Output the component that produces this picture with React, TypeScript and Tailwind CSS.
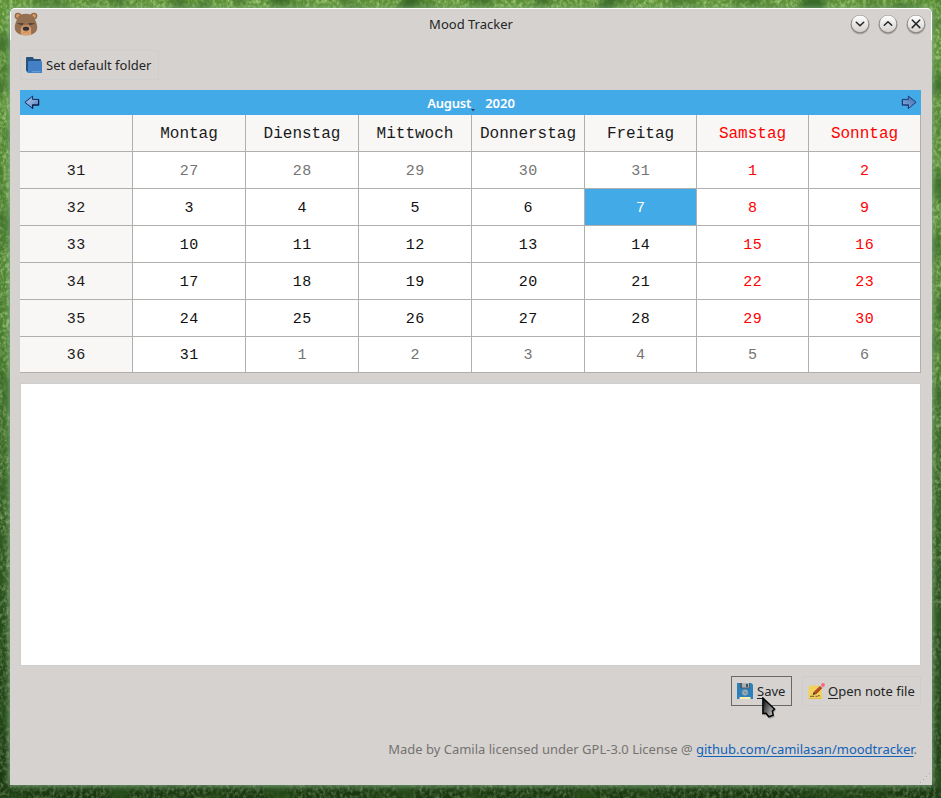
import React from "react";

const days = ["", "Montag", "Dienstag", "Mittwoch", "Donnerstag", "Freitag", "Samstag", "Sonntag"];

const weeks = [
  [31, 27, 28, 29, 30, 31, 1, 2],
  [32, 3, 4, 5, 6, 7, 8, 9],
  [33, 10, 11, 12, 13, 14, 15, 16],
  [34, 17, 18, 19, 20, 21, 22, 23],
  [35, 24, 25, 26, 27, 28, 29, 30],
  [36, 31, 1, 2, 3, 4, 5, 6],
];

function cellTone(row: number, col: number): string {
  if (col === 0) return "bg-[#f8f7f6] text-[#1a1a1a]";
  if (row === 1 && col === 5) return "bg-[#43aae8] text-white";
  const outside = (row === 0 && col < 6) || (row === 5 && col > 1);
  if (outside) return "bg-white text-[#747474]";
  if (col > 5) return "bg-white text-[#ff0000]";
  return "bg-white text-[#111111]";
}

function Grass() {
  return (
    <svg className="absolute inset-0" width="941" height="798" aria-hidden="true">
      <defs>
        <linearGradient id="grassBase" x1="0" y1="0" x2="0" y2="1">
          <stop offset="0" stopColor="#5c9136" />
          <stop offset="0.45" stopColor="#4b7f30" />
          <stop offset="0.75" stopColor="#345f24" />
          <stop offset="1" stopColor="#234717" />
        </linearGradient>
        <linearGradient id="shade" x1="0" y1="0" x2="0" y2="1">
          <stop offset="0.4" stopColor="#0a1f06" stopOpacity="0" />
          <stop offset="0.95" stopColor="#0a1f06" stopOpacity="0.38" />
        </linearGradient>
        <filter id="blades" x="0" y="0" width="100%" height="100%">
          <feTurbulence type="fractalNoise" baseFrequency="0.3 0.25" numOctaves="3" seed="4" />
          <feColorMatrix values="0 0 0 0 0.68  0 0 0 0 0.88  0 0 0 0 0.42  1.3 0 0 0 -0.52" />
        </filter>
        <filter id="clumps" x="0" y="0" width="100%" height="100%">
          <feTurbulence type="fractalNoise" baseFrequency="0.03 0.03" numOctaves="2" seed="9" />
          <feColorMatrix values="0 0 0 0 0.04  0 0 0 0 0.14  0 0 0 0 0.02  3.2 0 0 0 -1.45" />
        </filter>
        <filter id="halo" x="-5%" y="-5%" width="110%" height="110%">
          <feGaussianBlur stdDeviation="2.6" />
        </filter>
      </defs>
      <rect width="941" height="798" fill="url(#grassBase)" />
      <rect width="941" height="798" filter="url(#blades)" />
      <rect width="941" height="798" filter="url(#clumps)" />
      <rect width="941" height="798" fill="url(#shade)" />
      <rect x="8" y="7" width="926" height="780" rx="5" fill="#86b088" opacity="0.7" filter="url(#halo)" />
    </svg>
  );
}

function Bear() {
  return (
    <svg width="24" height="24" viewBox="0 0 24 24" aria-hidden="true">
      <circle cx="4" cy="4" r="3.3" fill="#8d6748" />
      <circle cx="20" cy="4" r="3.3" fill="#8d6748" />
      <circle cx="4" cy="4" r="2" fill="#d99b69" />
      <circle cx="20" cy="4" r="2" fill="#d99b69" />
      <path d="M12 1.8C6 1.8 3 5 2.4 9C1.5 11 .8 13 .8 15.4C.8 20.6 5.5 23.2 12 23.2S23.2 20.6 23.2 15.4C23.2 13 22.5 11 21.6 9C21 5 18 1.8 12 1.8Z" fill="#957050" />
      <path d="M12 13.2c-3.4 0-5.1 1.7-5.1 4.4v4.8c3 1.1 7.2 1.1 10.2 0v-4.8c0-2.7-1.7-4.4-5.1-4.4Z" fill="#e0a06c" />
      <path d="M3.4 11.6h6.2M14.4 11.6h6.2" stroke="#5a4638" strokeWidth="1" />
      <path d="M5.5 12.2h3.3M15.2 12.2h3.3" stroke="#4a3c34" strokeWidth="1.1" />
      <ellipse cx="12" cy="16.7" rx="3.2" ry="2.1" fill="#303239" />
      <path d="M12 18.5v1.2M9.2 20.8c1.3-1.3 4.3-1.3 5.6 0" fill="none" stroke="#b37f55" strokeWidth=".7" />
    </svg>
  );
}

function WindowButton({ id, d }: { id: string; d: string }) {
  return (
    <svg width="22" height="22" viewBox="0 0 22 22" aria-hidden="true">
      <defs>
        <linearGradient id={id} x1="0" y1="0" x2="0" y2="1">
          <stop offset="0" stopColor="#ffffff" />
          <stop offset="1" stopColor="#d4d0cd" />
        </linearGradient>
      </defs>
      <circle cx="11" cy="11.8" r="9.7" fill="#8c8886" opacity=".45" />
      <circle cx="11" cy="11.3" r="9.2" fill="#777371" opacity=".7" />
      <circle cx="11" cy="10.8" r="8.4" fill={`url(#${id})`} />
      <path d={d} fill="none" stroke="#222426" strokeWidth="1.5" strokeLinecap="round" strokeLinejoin="round" />
    </svg>
  );
}

function Arrow({ right = false }: { right?: boolean }) {
  return (
    <svg width="16" height="16" viewBox="0 0 16 16" className={right ? "-scale-x-100" : ""} aria-hidden="true">
      <defs>
        <linearGradient id={right ? "arrowR" : "arrowL"} x1="0" y1="0" x2="1" y2="1">
          <stop offset="0" stopColor={right ? "#3f6cae" : "#a9c3e6"} />
          <stop offset="0.5" stopColor={right ? "#648cc4" : "#86a9da"} />
          <stop offset="1" stopColor={right ? "#8fb0dc" : "#4a72b3"} />
        </linearGradient>
      </defs>
      <path
        d="M.9 7.3L8.6 1.1V4.4H14.6V10H8.6V13.5Z"
        fill={right ? "url(#arrowR)" : "url(#arrowL)"}
        stroke={right ? "#1d3a78" : "#14275a"}
        strokeWidth="1"
      />
      <path d="M8.6 13.5V10H14.6V4.4" fill="none" stroke={right ? "#1d3a78" : "#0a1638"} strokeWidth="1.1" />
    </svg>
  );
}

function Folder() {
  return (
    <svg width="16" height="16" viewBox="0 0 16 16" aria-hidden="true">
      <path d="M0 1.2Q0 0 1 0H6.8L8 2H14Q15 2 15 3V15H2Q0 15 0 13Z" fill="#25527e" />
      <path d="M2 5.2Q2 4 3.2 4H15Q16 4 16 5V16H1Q2 15.6 2 14Z" fill="#4380c5" />
      <path d="M6 14.7H14.5" stroke="#76a9df" strokeWidth=".8" />
    </svg>
  );
}

function Floppy() {
  return (
    <svg width="16" height="16" viewBox="0 0 16 16" aria-hidden="true">
      <path d="M0 0H14.2L16 1.8V16H0Z" fill="#2d80b9" />
      <path d="M3 0H13V5.5H3Z" fill="#4f5d68" />
      <path d="M5 0H12V4.5H5Z" fill="#a7b2b9" />
      <path d="M9 1H11V4H9Z" fill="#43535e" />
      <circle cx="8" cy="9.5" r="2.9" fill="#9eabb2" />
      <path d="M6.7 8.6L9.3 10.4" stroke="#627685" strokeWidth="1" />
      <path d="M2.5 14H13.5V16H2.5Z" fill="#fff0b0" />
    </svg>
  );
}

function Note() {
  return (
    <svg width="17" height="17" viewBox="0 0 17 17" aria-hidden="true">
      <path d="M1 3Q7 2 14 3.5Q13.5 10 14.5 15L12 16H.7Q0 10 1 3Z" fill="#f4d15b" />
      <path d="M.7 14.9H14.5L12 16H.7Z" fill="#e3b945" />
      <path d="M5 11.4L6.2 8.6L12.4 2.4L14.8 4.6L8.4 10.9Z" fill="#a54522" />
      <path d="M7 9.4L13.2 3.2" stroke="#c9622c" strokeWidth="1" />
      <path d="M4.6 11.8L5.4 9.2L7.5 11.2Z" fill="#443c33" />
      <path d="M12.2 2.2L14.7 4.6" stroke="#cadbe2" strokeWidth="1.2" />
      <circle cx="15" cy="2" r="1.9" fill="#ff6577" />
      <path d="M2 13.3H6.3M7.4 13.3H9.4L11 12.4L12 13.3" fill="none" stroke="#6b5f38" strokeWidth="1" />
    </svg>
  );
}

function Pointer() {
  return (
    <svg className="absolute left-[762px] top-[697px]" width="17" height="25" viewBox="0 0 17 25" aria-hidden="true">
      <defs>
        <linearGradient id="pointerFill" x1="0" y1="0" x2="1" y2="0.7">
          <stop offset="0" stopColor="#0c0c0c" />
          <stop offset=".3" stopColor="#3c3c3c" />
          <stop offset="0.9" stopColor="#b0b0b0" />
        </linearGradient>
      </defs>
      <path d="M2 3L14 14L10.8 15.5L13 20L8 22L4 18L2 19Z" fill="#444444" opacity=".3" />
      <path d="M.9 1L12.6 12.2L10.4 14L11.2 18.2L6.8 19.8L4 16.2L.9 16.6Z" fill="url(#pointerFill)" stroke="#050505" strokeWidth="1.5" />
    </svg>
  );
}

export default function App() {
  return (
    <div className="relative h-[798px] w-[941px] overflow-hidden bg-[#3b6a25] pt-2 pl-2.5 font-['Noto_Sans',sans-serif] text-[13px] leading-[18px] text-[#232627]">
      <Grass />
      <main className="relative flex h-[777px] w-[922px] flex-col rounded-t-[5px] border-t border-white bg-[#d6d2cf]">
        <div className="absolute left-0 top-[3px] h-[28px] w-px bg-white" />
        <div className="absolute right-0 top-[3px] h-[28px] w-px bg-white" />
        <header className="grid h-[41px] grid-cols-[92px_1fr_92px] pt-[3px]">
          <div className="pl-1">
            <Bear />
          </div>
          <h1 className="pt-[3px] text-center">Mood Tracker</h1>
          <div className="flex gap-1.5 pl-[9px] pt-px">
            <WindowButton id="minFill" d="M7.3 9.2L11 12.8L14.7 9.2" />
            <WindowButton id="maxFill" d="M7.3 12.3L11 8.7L14.7 12.3" />
            <WindowButton id="closeFill" d="M7.2 7L14.8 14.6M14.8 7L7.2 14.6" />
          </div>
        </header>

        <div className="flex flex-1 flex-col px-2.5">
          <button className="flex h-[30px] w-[139px] items-center gap-1 whitespace-nowrap border border-[#cccecf] pl-[5px]">
            <Folder />
            <span>Set default folder</span>
          </button>

          <section className="mt-2.5 w-[901px]">
            <div className="flex h-[25px] items-center justify-between bg-[#43aae8] px-1 font-semibold text-white">
              <Arrow />
              <div className="flex pl-px">
                <span className="w-[58px] whitespace-nowrap tracking-[-0.2px]">
                  August
                  <svg className="inline-block align-[-4px]" width="4" height="3" viewBox="0 0 4 3">
                    <path d="M0 0H4L2 2.4Z" fill="#2c4252" />
                  </svg>
                </span>
                <span>2020</span>
              </div>
              <Arrow right />
            </div>
            <div className="grid grid-cols-[113px_113px_113px_113px_113px_112px_112px_112px] grid-rows-[37px_37px_37px_37px_37px_37px_36px] font-['Liberation_Mono',monospace] leading-[18px]">
              {days.map((day, i) => (
                <div
                  key={`d${i}`}
                  className={`flex items-center justify-center border-b border-r border-[#b1afad] bg-[#f8f7f6] pt-px text-[16px] ${i > 5 ? "text-[#ff0000]" : "text-[#1a1a1a]"}`}
                >
                  {day}
                </div>
              ))}
              {weeks.map((week, r) =>
                week.map((n, c) => (
                  <div
                    key={`${r}-${c}`}
                    className={`flex items-center justify-center border-b border-r border-[#b1afad] pl-[0.6px] pt-[3px] text-[15px] tracking-[0.6px] ${cellTone(r, c)}`}
                  >
                    {n}
                  </div>
                )),
              )}
            </div>
          </section>

          <textarea
            aria-label="Note"
            className="mt-2.5 block h-[283px] w-[901px] resize-none border border-[#cccecf] bg-white outline-none"
          />

          <div className="mt-2.5 flex h-[30px] w-[901px] justify-end gap-2.5">
            <button className="flex w-[61px] items-center gap-1 border border-[#686868] pl-[5px]">
              <Floppy />
              <span className="whitespace-nowrap">
                <span className="underline underline-offset-2">S</span>ave
              </span>
            </button>
            <button className="flex w-[119px] items-center gap-[3px] border border-[#cccecf] pl-[5px]">
              <Note />
              <span className="whitespace-nowrap">
                <span className="underline underline-offset-2">O</span>pen note file
              </span>
            </button>
          </div>

          <footer className="mt-[34px] w-[897px] text-right text-[#757371]">
            Made by Camila licensed under GPL-3.0 License @{" "}
            <a className="text-[#1262b8] underline underline-offset-2">github.com/camilasan/moodtracker</a>.
          </footer>
        </div>
        <svg className="absolute bottom-0 right-0" width="14" height="14" viewBox="0 0 14 14" aria-hidden="true">
          <path d="M2 11h1v1H2zM5 8h1v1H5zM8 5h1v1H8zM11 2h1v1h-1z" fill="#aaa7a5" />
        </svg>
      </main>
      <Pointer />
    </div>
  );
}
